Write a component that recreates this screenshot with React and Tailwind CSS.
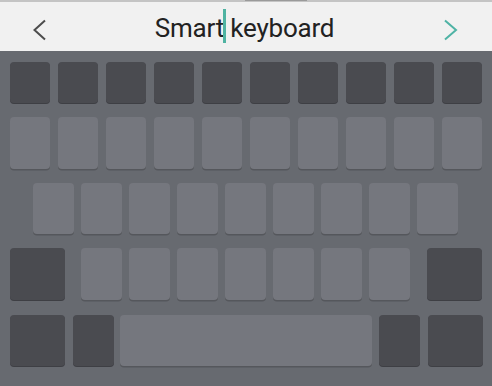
const Dark = ({ w = 'w-[40px]' }) => (
  <div className={`${w} h-full rounded-[4px] bg-[#4a4b50] shadow-[0_1px_0_#3e3f44]`} />
)

const Light = ({ w = 'w-[40px]' }) => (
  <div className={`${w} h-full rounded-[4px] bg-[#75777e] shadow-[0_1.5px_0_#55575c]`} />
)

export default function App() {
  return (
    <div className="w-[492px] h-[386px] flex flex-col bg-[#676a70] overflow-hidden" style={{ fontFamily: 'Roboto, "Noto Sans", sans-serif' }}>
      {/* top strip */}
      <div className="h-[2px] flex bg-[#c4c4c4]">
        <div className="ml-[245px] w-[62px] h-[1px] bg-[#9a9a9a]" />
      </div>
      {/* title bar */}
      <div className="h-[49px] bg-[#f1f1f1] flex items-start justify-between px-[32px]">
        <svg width="16" height="22" viewBox="0 0 16 22" className="mt-[16.5px]">
          <path d="M13 1.5 L2.5 11 L13 20.5" fill="none" stroke="#4d4d4d" strokeWidth="2" />
        </svg>
        <div className="mt-[13px] text-[26px] leading-none text-[#222] tracking-[-0.2px] ml-[0px]">
          Smart
          <span className="relative inline-block w-0 h-0">
            <span className="absolute left-[-1px] top-[-28px] w-[2.5px] h-[34px] bg-[#4fb3a2]" />
          </span>
          {' '}keyboard
        </div>
        <svg width="20" height="22" viewBox="0 0 20 22" className="mt-[16.5px] mr-[-1px]">
          <path d="M4 1.5 L15 11 L4 20.5" fill="none" stroke="#4fb3a5" strokeWidth="2" />
        </svg>
      </div>
      {/* keyboard */}
      <div className="flex flex-col pt-[11px]">
        <div className="h-[41px] flex gap-[8px] pl-[10px]">
          {Array.from({ length: 10 }).map((_, i) => <Dark key={i} />)}
        </div>
        <div className="h-[52px] mt-[14px] flex gap-[8px] pl-[10px]">
          {Array.from({ length: 10 }).map((_, i) => <Light key={i} />)}
        </div>
        <div className="h-[51px] mt-[14px] flex gap-[7px] pl-[33px]">
          {Array.from({ length: 9 }).map((_, i) => <Light key={i} w="w-[41px]" />)}
        </div>
        <div className="h-[52px] mt-[14px] flex pl-[10px]">
          <Dark w="w-[55px]" />
          <div className="flex gap-[7px] ml-[16px]">
            {Array.from({ length: 7 }).map((_, i) => <Light key={i} w="w-[41px]" />)}
          </div>
          <div className="ml-[17px] h-full flex"><Dark w="w-[55px]" /></div>
        </div>
        <div className="h-[51px] mt-[15px] flex pl-[10px]">
          <Dark w="w-[55px]" />
          <div className="ml-[8px] h-full flex"><Dark w="w-[41px]" /></div>
          <div className="ml-[6px] h-full flex"><Light w="w-[252px]" /></div>
          <div className="ml-[7px] h-full flex"><Dark w="w-[41px]" /></div>
          <div className="ml-[8px] h-full flex"><Dark w="w-[55px]" /></div>
        </div>
      </div>
    </div>
  )
}
